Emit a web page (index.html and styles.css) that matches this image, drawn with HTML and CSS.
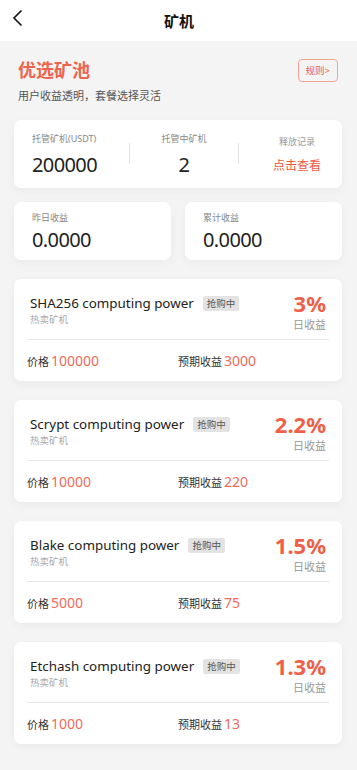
FILE: index.html
```html
<!DOCTYPE html>
<html lang="zh">
<head>
<meta charset="utf-8">
<meta name="viewport" content="width=device-width, initial-scale=1">
<title>矿机</title>
<link rel="stylesheet" href="styles.css">
</head>
<body>
<div class="header">
  <svg class="back" width="12" height="18" viewBox="0 0 12 18"><polyline points="9.5,1.5 2,9 9.5,16.5" fill="none" stroke="#111" stroke-width="1.6"/></svg>
  <div class="title">矿机</div>
</div>
<div class="main">
  <div class="intro">
    <div>
      <h1 class="intro-title">优选矿池</h1>
      <p class="intro-sub">用户收益透明，套餐选择灵活</p>
    </div>
    <div class="rule">规则&gt;</div>
  </div>

  <div class="card stats">
    <div class="col col1">
      <div class="s-label">托管矿机(USDT)</div>
      <div class="s-value">200000</div>
    </div>
    <div class="vline"></div>
    <div class="col col2">
      <div class="s-label">托管中矿机</div>
      <div class="s-value">2</div>
    </div>
    <div class="vline"></div>
    <div class="col col3">
      <div class="s-label s-label3">释放记录</div>
      <div class="s-link">点击查看</div>
    </div>
  </div>

  <div class="boxes">
    <div class="card box">
      <div class="s-label b-label">昨日收益</div>
      <div class="s-value b-value">0.0000</div>
    </div>
    <div class="card box">
      <div class="s-label b-label">累计收益</div>
      <div class="s-value b-value">0.0000</div>
    </div>
  </div>

  <div class="card prod">
    <div class="prod-top">
      <div class="prod-left">
        <div class="prod-name-row"><span class="prod-name">SHA256 computing power</span><span class="badge">抢购中</span></div>
        <div class="prod-sub">热卖矿机</div>
      </div>
      <div class="prod-right">
        <div class="pct">3%</div>
        <div class="pct-label">日收益</div>
      </div>
    </div>
    <div class="prod-bot">
      <div class="half"><span class="k">价格</span><span class="v">100000</span></div>
      <div class="half"><span class="k">预期收益</span><span class="v">3000</span></div>
    </div>
  </div>

  <div class="card prod">
    <div class="prod-top">
      <div class="prod-left">
        <div class="prod-name-row"><span class="prod-name">Scrypt computing power</span><span class="badge">抢购中</span></div>
        <div class="prod-sub">热卖矿机</div>
      </div>
      <div class="prod-right">
        <div class="pct">2.2%</div>
        <div class="pct-label">日收益</div>
      </div>
    </div>
    <div class="prod-bot">
      <div class="half"><span class="k">价格</span><span class="v">10000</span></div>
      <div class="half"><span class="k">预期收益</span><span class="v">220</span></div>
    </div>
  </div>

  <div class="card prod">
    <div class="prod-top">
      <div class="prod-left">
        <div class="prod-name-row"><span class="prod-name">Blake computing power</span><span class="badge">抢购中</span></div>
        <div class="prod-sub">热卖矿机</div>
      </div>
      <div class="prod-right">
        <div class="pct">1.5%</div>
        <div class="pct-label">日收益</div>
      </div>
    </div>
    <div class="prod-bot">
      <div class="half"><span class="k">价格</span><span class="v">5000</span></div>
      <div class="half"><span class="k">预期收益</span><span class="v">75</span></div>
    </div>
  </div>

  <div class="card prod">
    <div class="prod-top">
      <div class="prod-left">
        <div class="prod-name-row"><span class="prod-name">Etchash computing power</span><span class="badge">抢购中</span></div>
        <div class="prod-sub">热卖矿机</div>
      </div>
      <div class="prod-right">
        <div class="pct">1.3%</div>
        <div class="pct-label">日收益</div>
      </div>
    </div>
    <div class="prod-bot">
      <div class="half"><span class="k">价格</span><span class="v">1000</span></div>
      <div class="half"><span class="k">预期收益</span><span class="v">13</span></div>
    </div>
  </div>
</div>
</body>
</html>
```

FILE: styles.css
```css
* { box-sizing: border-box; }
html, body { margin: 0; padding: 0; }
body {
  background: #f4f4f4;
  font-family: "Noto Sans", "Noto Sans CJK SC", sans-serif;
  color: #222;
  min-height: 770px;
}
.header {
  height: 41px;
  background: #fff;
  display: flex;
  align-items: center;
  justify-content: center;
  position: relative;
}
.back {
  position: absolute;
  left: 12px;
  top: 8.5px;
}
.title {
  font-size: 15px;
  font-weight: 700;
  color: #111;
  line-height: 20px;
  margin-left: 1px;
}
.main {
  padding: 0 15px 27px 14px;
}
.intro {
  display: flex;
  justify-content: space-between;
  align-items: flex-start;
  padding: 17px 4px 0 4px;
  margin-bottom: 16px;
}
.intro-title {
  margin: 0;
  font-size: 18px;
  line-height: 24px;
  font-weight: 700;
  color: #ef644d;
}
.intro-sub {
  margin: 6px 0 0;
  font-size: 11px;
  line-height: 16px;
  color: #555;
}
.rule {
  margin-top: 1px;
  height: 23px;
  padding: 0 7px;
  border: 1px solid #f2a497;
  border-radius: 4px;
  font-size: 9.5px;
  line-height: 21px;
  color: #e6634f;
}
.card {
  background: #fff;
  border-radius: 7px;
  box-shadow: 0 3px 10px rgba(0, 0, 0, 0.045);
}
.stats {
  height: 68px;
  display: flex;
  align-items: flex-start;
  padding: 0 21px 0 18px;
}
.col { padding-top: 12px; }
.col1 { width: 97px; }
.col2 { width: 108px; text-align: center; }
.col3 { margin-left: auto; text-align: center; padding-top: 15px; }
.s-label {
  font-size: 9px;
  line-height: 14px;
  color: #888;
}
.s-label3 { color: #999; }
.s-value {
  margin-top: 6px;
  font-size: 20px;
  line-height: 26px;
  color: #222;
  letter-spacing: -0.6px;
}
.s-link {
  margin-top: 8px;
  font-size: 12px;
  line-height: 18px;
  color: #f0583f;
}
.vline {
  width: 1px;
  height: 21px;
  margin-top: 23px;
  background: #e2e2e2;
}
.boxes {
  display: flex;
  gap: 14px;
  margin-top: 14px;
}
.box {
  flex: 1;
  height: 58px;
  padding: 9px 0 0 18px;
}
.b-value { margin-top: 2px; }
.prod {
  height: 102px;
  margin-top: 19px;
  padding: 0 13px;
}
.prod-top {
  height: 61px;
  display: flex;
  justify-content: space-between;
  padding: 0 3px;
  border-bottom: 1px solid #e6e6e6;
}
.prod-left { padding-top: 13px; }
.prod-name-row {
  display: flex;
  align-items: center;
  height: 22px;
}
.prod-name {
  font-size: 13.4px;
  line-height: 22px;
  color: #222;
}
.badge {
  margin-left: 9px;
  height: 15px;
  padding: 0 4px;
  background: #e3e3e3;
  border-radius: 2px;
  font-size: 9.5px;
  line-height: 15px;
  color: #555;
}
.prod-sub {
  font-size: 9.5px;
  line-height: 12px;
  color: #aaa;
}
.prod-right {
  padding-top: 12px;
  text-align: right;
}
.pct {
  font-size: 22px;
  line-height: 24px;
  font-weight: 700;
  color: #f05f48;
}
.pct-label {
  margin-top: 3px;
  font-size: 11px;
  line-height: 13px;
  color: #999;
}
.prod-bot {
  height: 40px;
  display: flex;
  align-items: center;
}
.half { flex: 1; }
.k {
  font-size: 11px;
  color: #333;
}
.v {
  margin-left: 2px;
  font-size: 14px;
  color: #f26a5a;
}
```
